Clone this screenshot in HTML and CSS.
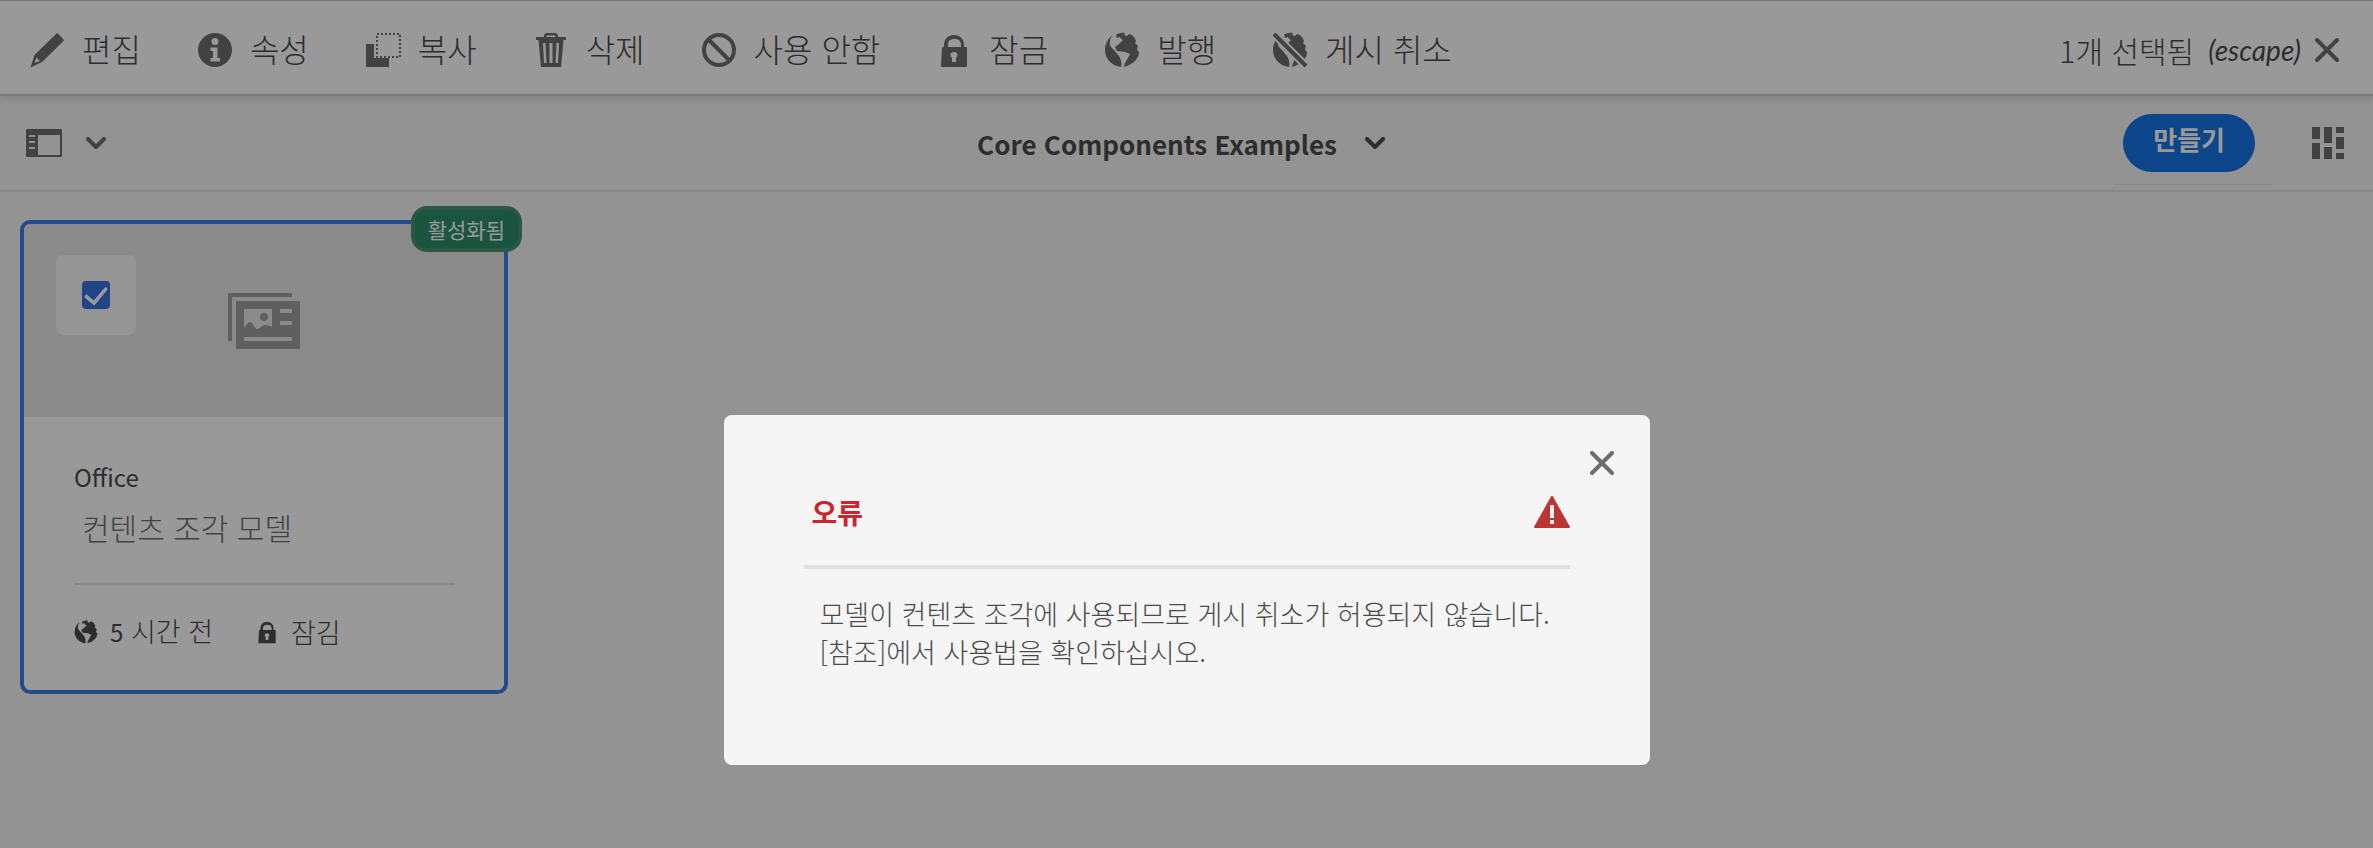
FILE: index.html
```html
<!DOCTYPE html>
<html lang="ko">
<head>
<meta charset="utf-8">
<meta name="viewport" content="width=device-width, initial-scale=1">
<title>Core Components Examples</title>
<link rel="stylesheet" href="styles.css">
</head>
<body>
<svg class="sprite" aria-hidden="true">
  <symbol id="globe" viewBox="0 0 36 36">
    <path d="M9 3C4 6 1 12 1 18c0 9 7 16 16 17 1-4 0-8-2-11l-5-6c-3-3-5-5-4-9 0-2 1-4 3-6z"/>
    <path d="M12 2.500c3-1.500 7-2 9-1.500l-1 2 3 1 2-2c4 1 6 4 7 7l-1 2 3 3-1 4 2 2c0 6-5 12-15 15 0-3 2-6 4-9l2-4-5-2-8-1-2-4 4-3 4-4-2-1-1-2-3 1z"/>
  </symbol>
  <symbol id="lock" viewBox="0 0 36 36">
    <path fill-rule="evenodd" d="M6 16a1 1 0 0 1 1-1h1v-2C8 7 12 3 18 3s10 4 10 10v2h2a1 1 0 0 1 1 1v18a1 1 0 0 1-1 1H6a1 1 0 0 1-1-1zm6-1h13v-2c0-4-2-6-6.500-6S12 9 12 13zm6 5c-2 0-3.500 1-3.500 3 0 1 .5 2 1.500 3v4h4v-4c1-1 1.500-2 1.500-3 0-2-1.500-3-3.500-3z"/>
  </symbol>
  <symbol id="chevron" viewBox="0 0 20 12"><path class="stroke" d="M2 2l8 8 8-8"/></symbol>
  <symbol id="cross" viewBox="0 0 24 24"><path class="stroke" d="M2 2l20 20M22 2L2 22"/></symbol>
</svg>

<header class="actionbar">
  <div class="actions">
    <button class="action" type="button"><svg class="icon" viewBox="0 0 36 36"><path fill-rule="evenodd" d="M27.500 1.500a1 1 0 0 1 1.400 0l5.600 6a1 1 0 0 1 0 1.400L13 30 1.500 35.500 5.500 23zM7.500 25.500L5.500 31l5.500-2z"/></svg>편집</button>
    <button class="action" type="button"><svg class="icon" viewBox="0 0 36 36"><path fill-rule="evenodd" d="M18 1a17 17 0 1 0 0 34 17 17 0 0 0 0-34zm0 5a3.500 3.500 0 1 1 0 7 3.500 3.500 0 0 1 0-7zm-4.500 9.500h7V26H23v3.500h-9.500V26H16v-7h-2.500z"/></svg>속성</button>
    <button class="action" type="button"><svg class="icon" viewBox="0 0 36 36"><path d="M1 12h8v14h15v9H2a1 1 0 0 1-1-1z"/><path class="dots" d="M12 2h23v23H12z"/></svg>복사</button>
    <button class="action" type="button"><svg class="icon" viewBox="0 0 36 36"><path fill-rule="evenodd" d="M11 5V3l2-2h10l2 2v2h8v3h-2.500L28 35H8L5.500 8H3V5zm2.500 0h9V3.500h-9zM10 11l1 20h2.500l-1-20zm6.500 0v20h3V11zm7 0l-1 20H25l1-20z"/></svg>삭제</button>
    <button class="action" type="button"><svg class="icon" viewBox="0 0 36 36"><circle class="ring" cx="18" cy="18" r="15"/><path class="ring" d="M8 8l20 20"/></svg>사용 안함</button>
    <button class="action" type="button"><svg class="icon"><use href="#lock"/></svg>잠금</button>
    <button class="action" type="button"><svg class="icon"><use href="#globe"/></svg>발행</button>
    <button class="action" type="button"><svg class="icon" viewBox="0 0 36 36"><use href="#globe"/><path class="gap" d="M0 0l36 36"/><path class="slash" d="M2 2l32 32"/></svg>게시 취소</button>
  </div>
  <div class="selection">
    <span>1개 선택됨</span>
    <em class="hint">(escape)</em>
    <button class="plain" type="button" aria-label="선택 해제"><svg class="cross"><use href="#cross"/></svg></button>
  </div>
</header>

<nav class="titlebar">
  <button class="plain rail" type="button" aria-label="사이드 패널"><svg class="rail-icon" viewBox="0 0 36 28"><path fill-rule="evenodd" d="M1 0h34a1 1 0 0 1 1 1v26a1 1 0 0 1-1 1H1a1 1 0 0 1-1-1V1a1 1 0 0 1 1-1zm11 6v20h22V6zM3 6v2h6V6zm0 6v2h6v-2zm0 6v2h6v-2z"/></svg><svg class="chevron"><use href="#chevron"/></svg></button>
  <button class="plain heading" type="button">Core Components Examples<svg class="chevron"><use href="#chevron"/></svg></button>
  <div class="tools">
    <div class="create-slot"><button class="create" type="button">만들기</button></div>
    <button class="plain" type="button" aria-label="카드 보기"><svg class="cards" viewBox="0 0 32 32"><path d="M0 0h8v12H0zM0 16h8v16H0zM12 0h8v16h-8zM12 20h8v12h-8zM24 0h8v6h-8zM24 10h8v12h-8zM24 26h8v6h-8z"/></svg></button>
  </div>
</nav>

<main class="content">
  <article class="card">
    <span class="badge">활성화됨</span>
    <div class="preview">
      <label class="pick"><input class="tick" type="checkbox" checked aria-label="Office 선택"></label>
      <svg class="model" viewBox="0 0 72 56"><path d="M1 0h62a1 1 0 0 1 1 1v3H4v44H1a1 1 0 0 1-1-1V1a1 1 0 0 1 1-1z"/><path fill-rule="evenodd" d="M9 8h62a1 1 0 0 1 1 1v46a1 1 0 0 1-1 1H9a1 1 0 0 1-1-1V9a1 1 0 0 1 1-1zm7 8v20c2-4 4-7 6-7 3 0 4 7 7 7s5-4 8-4 5 1 7 2V16zm36 0v4h12v-4zm0 12v4h12v-4zM16 44v4h48v-4z"/><circle cx="36" cy="24" r="4"/></svg>
    </div>
    <div class="details">
      <h2 class="name">Office</h2>
      <p class="kind">컨텐츠 조각 모델</p>
      <div class="status">
        <span class="state"><svg class="mini"><use href="#globe"/></svg><span><span class="count">5</span> 시간 전</span></span>
        <span class="state"><svg class="mini"><use href="#lock"/></svg>잠김</span>
      </div>
    </div>
  </article>
</main>

<div class="backdrop">
  <section class="dialog" role="dialog" aria-modal="true" aria-labelledby="dialog-title">
    <button class="plain close" type="button" aria-label="닫기"><svg class="cross"><use href="#cross"/></svg></button>
    <header class="dialog-head">
      <h1 class="dialog-title" id="dialog-title">오류</h1>
      <svg class="alert" viewBox="0 0 36 32"><path fill-rule="evenodd" d="M17 .6a1.200 1.200 0 0 1 2 0L35.800 30.500a1 1 0 0 1-.8 1.500H1a1 1 0 0 1-.8-1.500zM16 9v13h4V9zm0 15v4h4v-4z"/></svg>
    </header>
    <p class="message">모델이 컨텐츠 조각에 사용되므로 게시 취소가 허용되지 않습니다.<br>[참조]에서 사용법을 확인하십시오.</p>
  </section>
</div>
</body>
</html>
```
FILE: styles.css
```css
* { box-sizing: border-box; }
body {
  margin: 0;
  min-height: 100vh;
  background: #f5f5f5;
  color: #4b4b4b;
  font-family: "Noto Sans CJK KR", "Noto Sans", sans-serif;
  font-size: 28px;
}
h1, h2, p { margin: 0; font-weight: 400; }
button { font: inherit; color: inherit; }
svg { display: block; flex: none; fill: #6e6e6e; }
.sprite { position: absolute; width: 0; height: 0; }
.stroke { fill: none; stroke: #6e6e6e; stroke-width: 4; stroke-linecap: round; stroke-linejoin: round; }

.actionbar {
  position: relative;
  display: flex;
  align-items: center;
  justify-content: space-between;
  height: 96px;
  padding: 0 34px 0 29px;
  background: #fff;
  border-top: 1px solid #c0c0c0;
  border-bottom: 2px solid #cacaca;
  box-shadow: 0 2px 8px rgba(0, 0, 0, .15);
}
.actions { display: flex; gap: 56px; }
.action, .plain {
  display: flex;
  align-items: center;
  padding: 0;
  border: 0;
  background: none;
}
.action { gap: 17px; font-size: 32px; font-weight: 300; line-height: 44px; white-space: nowrap; }
.icon { width: 36px; height: 36px; }
.action .icon { margin-top: 4px; }
.dots { fill: none; stroke: #6e6e6e; stroke-width: 2; stroke-dasharray: 2 2; }
.ring { fill: none; stroke: #6e6e6e; stroke-width: 4; }
.slash { stroke: #6e6e6e; stroke-width: 4; }
.gap { stroke: #fff; stroke-width: 8; }
.selection { display: flex; align-items: center; gap: 14px; padding-top: 4px; font-size: 30px; font-weight: 300; }
.hint { font-family: Lato, sans-serif; font-size: 28px; font-weight: 400; }
.cross { width: 24px; height: 24px; }
.chevron { width: 20px; height: 12px; }

.titlebar {
  display: grid;
  grid-template-columns: 1fr auto 1fr;
  align-items: center;
  height: 96px;
  padding: 0 29px 0 26px;
  border-bottom: 2px solid #e3e3e3;
}
.rail { gap: 24px; justify-self: start; }
.rail-icon { width: 36px; height: 28px; }
.heading { gap: 28px; padding-right: 8px; font-size: 26px; font-weight: 700; }
.heading .chevron { filter: brightness(.7); }
.tools { display: flex; align-items: center; justify-content: flex-end; gap: 41px; }
.create-slot { padding: 12px 16px 12px 9px; border-bottom: 1px solid #e3e3e3; }
.create {
  display: block;
  height: 58px;
  padding: 0 30px 8px;
  border: 0;
  border-radius: 29px;
  background: #1473e6;
  color: #fff;
  font-size: 26px;
  font-weight: 700;
  line-height: 50px;
}
.cards { width: 32px; height: 32px; }

.content { padding: 28px 20px; }
.card {
  position: relative;
  width: 488px;
  border: 4px solid #3f7ee8;
  border-radius: 10px;
  background: #fff;
}
.badge {
  position: absolute;
  top: -18px;
  right: -18px;
  padding: 5px 13px;
  border: 4px solid #4b916b;
  border-radius: 16px;
  background: #2b8e6b;
  color: #fff;
  font-size: 21px;
  line-height: 28px;
}
.preview {
  display: flex;
  align-items: flex-start;
  gap: 92px;
  height: 193px;
  padding: 31px 32px;
  border-radius: 6px 6px 0 0;
  background: #e8e8e8;
}
.pick { display: grid; place-items: center; width: 80px; height: 80px; border-radius: 8px; background: #f8f8f8; }
.tick {
  appearance: none;
  display: grid;
  place-items: center;
  width: 28px;
  height: 28px;
  margin: 0;
  border-radius: 4px;
  background: #3773e3;
}
.tick::after {
  content: "";
  width: 10px;
  height: 18px;
  margin-bottom: 5px;
  border: solid #fff;
  border-width: 0 4px 4px 0;
  border-radius: 2px;
  transform: rotate(40deg);
}
.model { width: 72px; height: 56px; margin-top: 38px; fill: #9e9e9e; }
.details { padding: 40px 50px 38px; }
.name { font-size: 24px; line-height: 40px; }
.kind { padding: 8px 0 0 8px; color: #6e6e6e; font-size: 30px; font-weight: 300; line-height: 44px; }
.status { display: flex; gap: 42px; margin-top: 34px; padding-top: 26px; border-top: 2px solid #e3e3e3; font-size: 27px; font-weight: 300; line-height: 40px; }
.state { display: flex; align-items: center; gap: 12px; }
.count { font-size: 24px; font-weight: 400; }
.mini { width: 24px; height: 24px; fill: #4b4b4b; }

.backdrop {
  position: fixed;
  inset: 0;
  display: flex;
  align-items: flex-end;
  justify-content: center;
  padding-bottom: 83px;
  background: rgba(0, 0, 0, .4);
}
.dialog {
  position: relative;
  width: 926px;
  padding: 72px 80px 94px;
  border-radius: 8px;
  background: #f5f5f5;
}
.close { position: absolute; top: 36px; right: 36px; }
.dialog-head { display: flex; align-items: center; justify-content: space-between; padding: 0 0 28px 8px; border-bottom: 4px solid #e1e1e1; }
.dialog-title { color: #c9252d; font-size: 28px; font-weight: 700; line-height: 50px; }
.alert { width: 36px; height: 32px; fill: #bb3535; }
.message { padding: 26px 0 0 16px; font-size: 27px; font-weight: 300; line-height: 38px; white-space: nowrap; }
```
